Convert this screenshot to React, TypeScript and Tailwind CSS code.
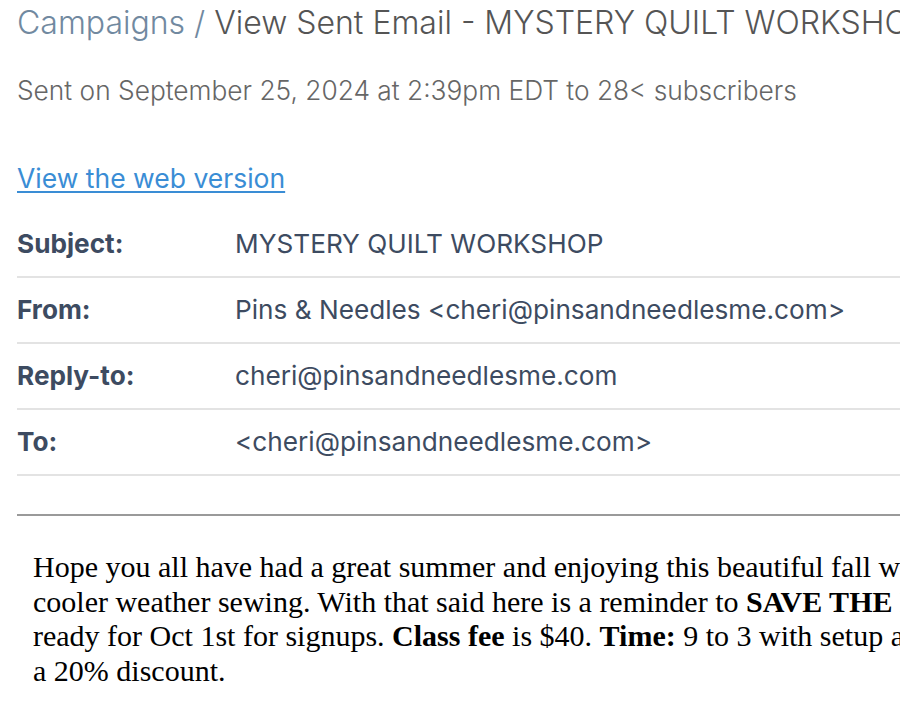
const rows = [
  { label: "Subject:", value: "MYSTERY QUILT WORKSHOP" },
  { label: "From:", value: "Pins & Needles <cheri@pinsandneedlesme.com>" },
  { label: "Reply-to:", value: "cheri@pinsandneedlesme.com" },
  { label: "To:", value: "<cheri@pinsandneedlesme.com>" },
];

export default function App() {
  return (
    <div className="h-[720px] w-[900px] overflow-hidden bg-white">
      <div className="w-[1300px] pl-[17px] pt-[3px] font-['Inter',sans-serif]">
        <h1 className="whitespace-nowrap text-[32px] leading-[40px] font-light text-[#555]">
          <a className="text-[#7189a0]">Campaigns</a>
          <span className="text-[#7189a0]"> / </span>
          View Sent Email - MYSTERY QUILT WORKSHOP
        </h1>
        <p className="mt-[32px] whitespace-nowrap text-[26.3px] leading-[32px] font-light text-[#666]">
          Sent on September 25, 2024 at 2:39pm EDT to 28&lt; subscribers
        </p>
        <a className="mt-[55px] block w-fit text-[26.5px] leading-[32px] text-[#3a8dd5] underline underline-offset-[3px]">
          View the web version
        </a>

        <div className="mt-[18px]">
          {rows.map((r) => (
            <div key={r.label} className="flex border-b-2 border-[#e3e3e3] pt-[16px] pb-[16px] text-[26.2px] leading-[32px] text-[#3d4b61]">
              <div className="w-[218px] shrink-0 font-bold">{r.label}</div>
              <div className="whitespace-nowrap">{r.value}</div>
            </div>
          ))}
        </div>

        <div className="mt-[38px] border-t-2 border-[#9a9a9a]" />

        <div className="px-[16px] pt-[34px] font-['Liberation_Serif',serif] text-[30px] leading-[34.5px] text-black whitespace-nowrap">
          <div>Hope you all have had a great summer and enjoying this beautiful fall weather and getting ready for</div>
          <div>
            cooler weather sewing. With that said here is a reminder to <b>SAVE THE DATE</b> for our
          </div>
          <div>
            ready for Oct 1st for signups. <b>Class fee</b> is $40. <b>Time:</b> 9 to 3 with setup at 8:30. Members get
          </div>
          <div>a 20% discount.</div>
        </div>
      </div>
    </div>
  );
}
